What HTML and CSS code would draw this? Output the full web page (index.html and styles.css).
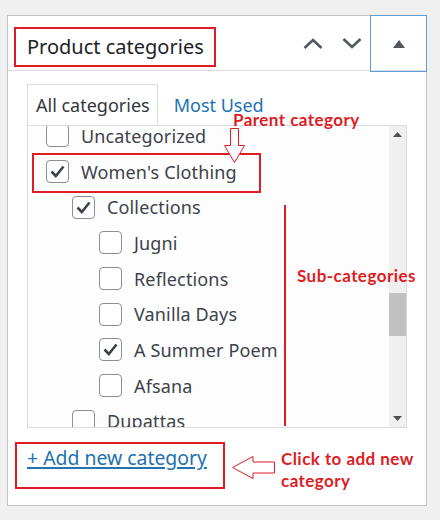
FILE: index.html
```html
<!DOCTYPE html>
<html lang="en">
<head>
<meta charset="utf-8">
<title>Product categories</title>
<link rel="stylesheet" href="styles.css">
</head>
<body>
<div class="page">
  <div class="panel">
    <div class="panel-header">
      <h2 class="panel-title">Product categories</h2>
      <div class="header-actions">
        <button class="order-btn" aria-label="Move up">
          <svg width="20" height="11" viewBox="0 0 20 11"><polyline points="1.5,10 10,2 18.5,10" fill="none" stroke="#50575e" stroke-width="2.6"/></svg>
        </button>
        <button class="order-btn" aria-label="Move down">
          <svg width="20" height="11" viewBox="0 0 20 11"><polyline points="1.5,1 10,9 18.5,1" fill="none" stroke="#50575e" stroke-width="2.6"/></svg>
        </button>
        <button class="toggle-btn" aria-label="Toggle panel">
          <svg width="12" height="8" viewBox="0 0 12 8"><polygon points="0,8 6,0 12,8" fill="#50575e"/></svg>
        </button>
      </div>
    </div>
    <div class="panel-body">
      <ul class="tabs">
        <li class="tab tab-active">All categories</li>
        <li class="tab tab-link">Most Used</li>
      </ul>
      <div class="checklist">
        <ul class="items">
          <li class="item"><span class="cb"></span><span class="label">Uncategorized</span></li>
          <li class="item item-parent"><span class="cb checked"><svg width="21" height="21" viewBox="0 0 21 21"><path d="M4.5 10.5 L8.8 15 L16.5 5.5" fill="none" stroke="#3c434a" stroke-width="2.6"/></svg></span><span class="label">Women's Clothing</span></li>
          <li class="item level-1"><span class="cb checked"><svg width="21" height="21" viewBox="0 0 21 21"><path d="M4.5 10.5 L8.8 15 L16.5 5.5" fill="none" stroke="#3c434a" stroke-width="2.6"/></svg></span><span class="label">Collections</span></li>
          <li class="item level-2"><span class="cb"></span><span class="label">Jugni</span></li>
          <li class="item level-2"><span class="cb"></span><span class="label">Reflections</span></li>
          <li class="item level-2"><span class="cb"></span><span class="label">Vanilla Days</span></li>
          <li class="item level-2"><span class="cb checked"><svg width="21" height="21" viewBox="0 0 21 21"><path d="M4.5 10.5 L8.8 15 L16.5 5.5" fill="none" stroke="#3c434a" stroke-width="2.6"/></svg></span><span class="label">A Summer Poem</span></li>
          <li class="item level-2"><span class="cb"></span><span class="label">Afsana</span></li>
          <li class="item level-1"><span class="cb"></span><span class="label">Dupattas</span></li>
        </ul>
        <div class="scrollbar">
          <div class="sb-arrow"><svg width="9" height="5" viewBox="0 0 9 5"><polygon points="0,5 4.5,0 9,5" fill="#505050"/></svg></div>
          <div class="sb-track"><div class="sb-thumb"></div></div>
          <div class="sb-arrow"><svg width="9" height="5" viewBox="0 0 9 5"><polygon points="0,0 4.5,5 9,0" fill="#505050"/></svg></div>
        </div>
      </div>
      <div class="add-row">
        <a class="add-link" href="#">+ Add new category</a>
      </div>
    </div>
  </div>

  <div class="note note-parent">Parent category</div>
  <svg class="arrow-down" width="23" height="36" viewBox="0 0 23 36"><polygon points="7.5,0.5 15.5,0.5 15.5,17.5 21.5,17.5 11.5,34.5 1.5,17.5 7.5,17.5" fill="#fff" stroke="#dd1c24" stroke-width="1"/></svg>
  <div class="vline"></div>
  <div class="note note-sub">Sub-categories</div>
  <svg class="arrow-left" width="44" height="24" viewBox="0 0 44 24"><polygon points="0.5,11.5 21,0.5 21,6 42.5,6 42.5,17 21,17 21,22.5" fill="#fff" stroke="#dd1c24" stroke-width="1"/></svg>
  <div class="note note-add">Click to add new<br>category</div>
</div>
</body>
</html>
```

FILE: styles.css
```css
* { box-sizing: border-box; }

html, body {
  margin: 0;
  padding: 0;
  background: #f0f0f1;
}

.page {
  position: relative;
  width: 440px;
  height: 520px;
  padding: 15px 0 0 7px;
  font-family: "Noto Sans", "Open Sans", sans-serif;
  color: #32373c;
}

.panel {
  width: 420px;
  background: #fff;
  border: 1px solid #c3c4c7;
}

.panel-header {
  display: flex;
  height: 55px;
  border-bottom: 1px solid #dcdcde;
}

.panel-title {
  margin: 11px 0 0 6px;
  height: 40px;
  padding: 0 10px 0 11px;
  border: 2px solid #dd1c24;
  font-size: 20px;
  font-weight: 400;
  line-height: 36px;
  color: #1d2327;
  white-space: nowrap;
}

.header-actions {
  margin-left: auto;
  display: flex;
  align-items: center;
}

.order-btn {
  width: 39px;
  height: 54px;
  padding: 0;
  border: 0;
  background: transparent;
  display: flex;
  align-items: center;
  justify-content: center;
}

.toggle-btn {
  align-self: flex-start;
  width: 55px;
  height: 55px;
  padding: 0;
  border: 0;
  background: transparent;
  outline: 1px solid #5b9dd9;
  display: flex;
  align-items: center;
  justify-content: center;
}

.panel-body {
  padding: 13px 19px 16px 19px;
}

.tabs {
  display: flex;
  margin: 0;
  padding: 0;
  list-style: none;
  font-size: 18px;
  line-height: 40px;
}

.tab-active {
  position: relative;
  z-index: 1;
  margin-bottom: -1px;
  padding: 0 7px 0 8px;
  background: #fff;
  border: 1px solid #dcdcde;
  border-bottom: 0;
  height: 41px;
  color: #32373c;
}

.tab-link {
  padding: 1px 0 0 16px;
  color: #2271b1;
}

.checklist {
  display: flex;
  height: 303px;
  border: 1px solid #dcdcde;
  background: #fdfdfd;
}

.items {
  flex: 1;
  margin: 0;
  padding: 0 0 0 18px;
  list-style: none;
  overflow: hidden;
}

.item {
  display: flex;
  align-items: center;
  gap: 12px;
  height: 35.7px;
  font-size: 18px;
  white-space: nowrap;
}

.item:first-child {
  margin-top: -8px;
}

.item-parent {
  position: relative;
}

.item-parent::after {
  content: "";
  position: absolute;
  left: -14px;
  top: -0.5px;
  width: 225px;
  height: 36px;
  border: 2px solid #dd1c24;
}

.level-1 { padding-left: 26px; }
.level-2 { padding-left: 53px; }

.cb {
  flex: none;
  width: 23px;
  height: 23px;
  border: 1px solid #8c8f94;
  border-radius: 4px;
  background: #fff;
  display: flex;
  align-items: center;
  justify-content: center;
}

.label {
  color: #3c434a;
  letter-spacing: 0.15px;
}

.scrollbar {
  flex: none;
  width: 17px;
  display: flex;
  flex-direction: column;
  background: #f0f0f0;
}

.sb-arrow {
  height: 17px;
  display: flex;
  align-items: center;
  justify-content: center;
}

.sb-track {
  flex: 1;
}

.sb-thumb {
  margin-top: 150px;
  height: 43px;
  background: #c1c1c1;
}

.add-row {
  margin: 14px 0 0 -12px;
  width: 210px;
  height: 47px;
  padding: 2px 0 0 10px;
  border: 2px solid #dd1c24;
}

.add-link {
  font-size: 19.4px;
  line-height: 24px;
  color: #2271b1;
  text-decoration: underline;
  text-decoration-thickness: 1.5px;
  text-underline-offset: 2px;
}

/* annotations */
.note {
  position: absolute;
  font-family: Lato, "Liberation Sans", sans-serif;
  font-weight: 700;
  color: #dd1c24;
  font-size: 17px;
  letter-spacing: 0.45px;
  line-height: 22px;
  white-space: nowrap;
}

.note-parent { left: 233px; top: 108.5px; }
.note-sub { left: 297px; top: 264.5px; }
.note-add { left: 281px; top: 447.5px; }

.arrow-down {
  position: absolute;
  left: 223px;
  top: 128px;
}

.arrow-left {
  position: absolute;
  left: 232px;
  top: 456px;
}

.vline {
  position: absolute;
  left: 284px;
  top: 205px;
  width: 2px;
  height: 221px;
  background: #dd1c24;
}
```
